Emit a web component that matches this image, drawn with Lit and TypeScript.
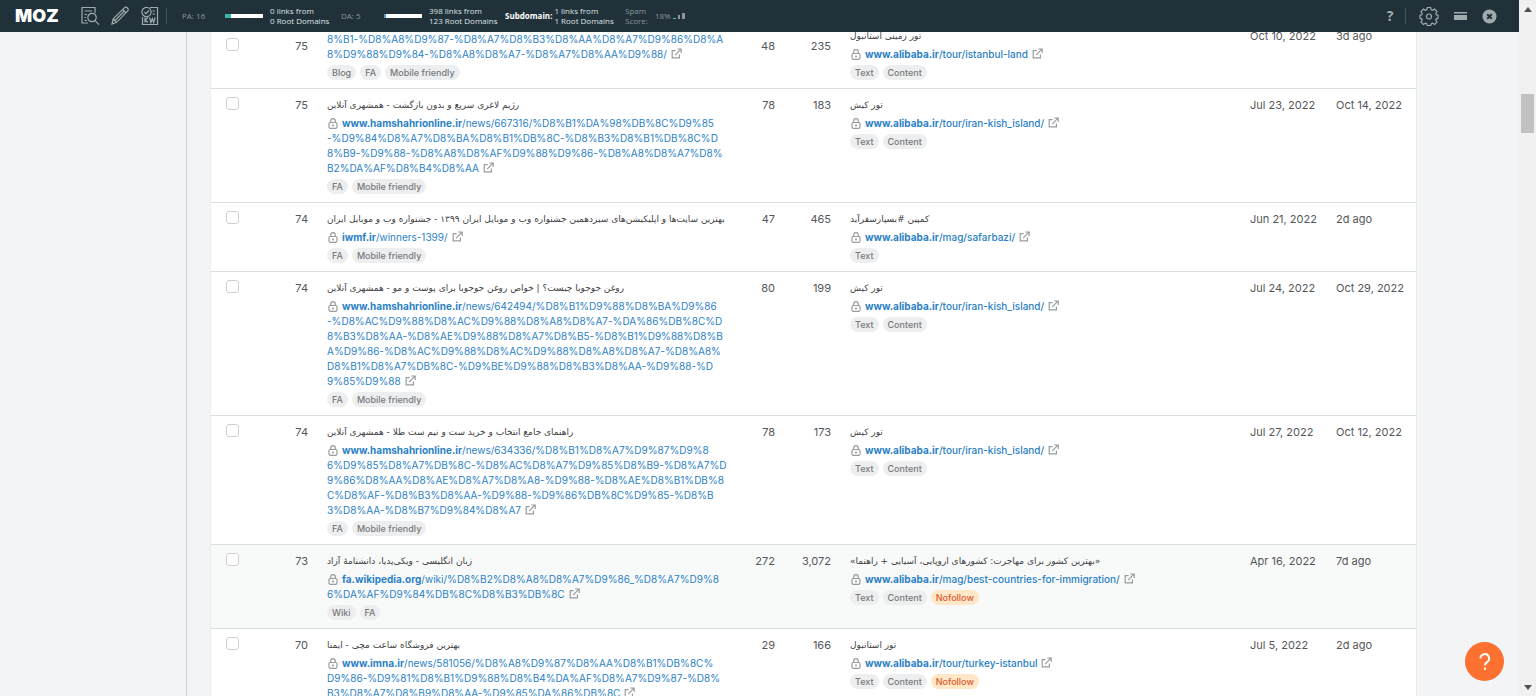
import { LitElement, html, css, svg, nothing } from "lit";
import { customElement, property } from "lit/decorators.js";

interface LinkRow {
  pa: string;
  title?: string;
  domain?: string;
  lines: string[];
  tags: string[];
  rd: string;
  ext: string;
  targetTitle: string;
  path: string;
  targetTags: string[];
  found: string;
  seen: string;
  partial?: boolean;
  hover?: boolean;
}

const rows: LinkRow[] = [
  {
    pa: "75",
    lines: ["8%B1-%D8%A8%D9%87-%D8%A7%D8%B3%D8%AA%D8%A7%D9%86%D8%A", "8%D9%88%D9%84-%D8%A8%D8%A7-%D8%A7%D8%AA%D9%88/"],
    tags: ["Blog", "FA", "Mobile friendly"],
    rd: "48", ext: "235",
    targetTitle: "تور زمینی استانبول", path: "/tour/istanbul-land", targetTags: ["Text", "Content"],
    found: "Oct 10, 2022", seen: "3d ago", partial: true,
  },
  {
    pa: "75",
    title: "رژیم لاغری سریع و بدون بازگشت - همشهری آنلاین",
    domain: "www.hamshahrionline.ir",
    lines: ["/news/667316/%D8%B1%DA%98%DB%8C%D9%85", "-%D9%84%D8%A7%D8%BA%D8%B1%DB%8C-%D8%B3%D8%B1%DB%8C%D", "8%B9-%D9%88-%D8%A8%D8%AF%D9%88%D9%86-%D8%A8%D8%A7%D8%", "B2%DA%AF%D8%B4%D8%AA"],
    tags: ["FA", "Mobile friendly"],
    rd: "78", ext: "183",
    targetTitle: "تور کیش", path: "/tour/iran-kish_island/", targetTags: ["Text", "Content"],
    found: "Jul 23, 2022", seen: "Oct 14, 2022",
  },
  {
    pa: "74",
    title: "بهترین سایت‌ها و اپلیکیشن‌های سیزدهمین جشنواره وب و موبایل ایران ۱۳۹۹ - جشنواره وب و موبایل ایران",
    domain: "iwmf.ir",
    lines: ["/winners-1399/"],
    tags: ["FA", "Mobile friendly"],
    rd: "47", ext: "465",
    targetTitle: "کمپین #بسپارسفرآید", path: "/mag/safarbazi/", targetTags: ["Text"],
    found: "Jun 21, 2022", seen: "2d ago",
  },
  {
    pa: "74",
    title: "روغن جوجوبا چیست؟ | خواص روغن جوجوبا برای پوست و مو - همشهری آنلاین",
    domain: "www.hamshahrionline.ir",
    lines: ["/news/642494/%D8%B1%D9%88%D8%BA%D9%86", "-%D8%AC%D9%88%D8%AC%D9%88%D8%A8%D8%A7-%DA%86%DB%8C%D", "8%B3%D8%AA-%D8%AE%D9%88%D8%A7%D8%B5-%D8%B1%D9%88%D8%B", "A%D9%86-%D8%AC%D9%88%D8%AC%D9%88%D8%A8%D8%A7-%D8%A8%", "D8%B1%D8%A7%DB%8C-%D9%BE%D9%88%D8%B3%D8%AA-%D9%88-%D", "9%85%D9%88"],
    tags: ["FA", "Mobile friendly"],
    rd: "80", ext: "199",
    targetTitle: "تور کیش", path: "/tour/iran-kish_island/", targetTags: ["Text", "Content"],
    found: "Jul 24, 2022", seen: "Oct 29, 2022",
  },
  {
    pa: "74",
    title: "راهنمای جامع انتخاب و خرید ست و نیم ست طلا - همشهری آنلاین",
    domain: "www.hamshahrionline.ir",
    lines: ["/news/634336/%D8%B1%D8%A7%D9%87%D9%8", "6%D9%85%D8%A7%DB%8C-%D8%AC%D8%A7%D9%85%D8%B9-%D8%A7%D", "9%86%D8%AA%D8%AE%D8%A7%D8%A8-%D9%88-%D8%AE%D8%B1%DB%8", "C%D8%AF-%D8%B3%D8%AA-%D9%88-%D9%86%DB%8C%D9%85-%D8%B", "3%D8%AA-%D8%B7%D9%84%D8%A7"],
    tags: ["FA", "Mobile friendly"],
    rd: "78", ext: "173",
    targetTitle: "تور کیش", path: "/tour/iran-kish_island/", targetTags: ["Text", "Content"],
    found: "Jul 27, 2022", seen: "Oct 12, 2022",
  },
  {
    pa: "73",
    title: "زبان انگلیسی - ویکی‌پدیا، دانشنامهٔ آزاد",
    domain: "fa.wikipedia.org",
    lines: ["/wiki/%D8%B2%D8%A8%D8%A7%D9%86_%D8%A7%D9%8", "6%DA%AF%D9%84%DB%8C%D8%B3%DB%8C"],
    tags: ["Wiki", "FA"],
    rd: "272", ext: "3,072",
    targetTitle: "«بهترین کشور برای مهاجرت: کشورهای اروپایی، آسیایی + راهنما»", path: "/mag/best-countries-for-immigration/", targetTags: ["Text", "Content", "Nofollow"],
    found: "Apr 16, 2022", seen: "7d ago", hover: true,
  },
  {
    pa: "70",
    title: "بهترین فروشگاه ساعت مچی - ایمنا",
    domain: "www.imna.ir",
    lines: ["/news/581056/%D8%A8%D9%87%D8%AA%D8%B1%DB%8C%", "D9%86-%D9%81%D8%B1%D9%88%D8%B4%DA%AF%D8%A7%D9%87-%D8%", "B3%D8%A7%D8%B9%D8%AA-%D9%85%DA%86%DB%8C"],
    tags: [],
    rd: "29", ext: "166",
    targetTitle: "تور استانبول", path: "/tour/turkey-istanbul", targetTags: ["Text", "Content", "Nofollow"],
    found: "Jul 5, 2022", seen: "2d ago",
  },
];

const lockIcon = html`<svg class="lock" viewBox="0 0 10 11" width="10" height="11" aria-hidden="true">
  <rect x="1" y="4.5" width="8" height="5.8" rx="1.2" />
  <path d="M2.7 4.5V3a2.3 2.3 0 0 1 4.6 0v1.5M5 6.6v1.8M4.1 7.4h1.8" />
</svg>`;

const outIcon = html`<svg class="out" viewBox="0 0 11 11" width="11" height="11" aria-hidden="true">
  <path d="M4.6 2.6H1.2v7.2h7.2V6.6M4.2 7.2 9.6 1.4M6.3 1h3.9v3.9" />
</svg>`;

@customElement("tag-list")
export class TagList extends LitElement {
  @property({ attribute: false }) tags: string[] = [];

  static styles = css`
    :host { display: flex; gap: 4px; margin-top: 3px; }
    .tag {
      height: 15px; padding: 0 5px; border-radius: 8px; background: #edeeef; color: #77797b;
      font: 500 9px/15px Inter, sans-serif; white-space: nowrap;
    }
    .warn { background: #ffe7c8; color: #dc5a2c; }
  `;

  render() {
    return this.tags.map((t) => html`<span class="tag ${t === "Nofollow" ? "warn" : ""}">${t}</span>`);
  }
}

@customElement("moz-bar")
export class MozBar extends LitElement {
  static styles = css`
    :host {
      display: flex; align-items: center; height: 32px; box-sizing: border-box; padding: 0 22px 0 15px;
      background: #203139; color: #dfe5e7; font: 8px/10px "Open Sans", "Noto Sans", sans-serif;
    }
    .logo { width: 65px; color: #fff; font: 900 18px/32px Inter, sans-serif; }
    button { display: flex; align-items: center; justify-content: center; padding: 0; border: 0; background: none; color: #a0abaf; }
    svg { display: block; fill: none; stroke: currentColor; stroke-width: 1.2; }
    .solid { fill: currentColor; stroke: none; }
    .tools { display: flex; gap: 10px; align-items: center; }
    .rule { width: 1px; height: 16px; background: #46565d; }
    .tools .rule { margin-left: -4px; }
    .metric { display: flex; align-items: center; }
    .label { width: 43px; color: #8c989d; }
    .track { width: 38px; height: 4px; margin-right: 7px; background: #fff; }
    .fill { height: 100%; background: #35b8b0; }
    .fill.blue { background: #4b9fe0; }
    .links { white-space: nowrap; }
    .pa { margin-left: 15px; width: 159px; }
    .da { width: 164px; }
    .sub { width: 120px; gap: 2px; }
    .spam { gap: 7px; color: #8c989d; }
    .spam svg { margin-left: -5px; }
    strong { color: #fff; }
    .actions { display: flex; align-items: center; margin-left: auto; gap: 15px; }
    .help { width: 12px; font: 700 14px/20px "Open Sans", sans-serif; }
    .actions .rule { margin: 0 -2px 0 -6px; }
  `;

  render() {
    return html`
      <span class="logo">MOZ</span>
      <div class="tools">
        <button aria-label="Page analysis"><svg width="20" height="20" viewBox="0 0 20 20">
          <path d="M8 17H2V1.5h13V7M4.5 5H12M4.5 8.5H7M4.5 11.5H6M4.5 14.5H7" /><circle cx="12" cy="11.5" r="4.2" /><path d="m15 14.7 4 4" /></svg></button>
        <button aria-label="Highlight links"><svg width="20" height="20" viewBox="0 0 20 20">
          <path d="m2 18 1.2-5.2L14.6 1.6c.8-.8 2-.4 2.8.4s1.200 2 .4 2.800L6.600 16.300zM3.200 12.800l3.400 3.500M12.700 3.500l3.500 3.500M5 14.500l9-9" /></svg></button>
        <button aria-label="Keyword ranking"><svg width="20" height="20" viewBox="0 0 20 20">
          <path d="M10 1.500h7.500v17h-15V11M12.500 5H15M12.500 8H15" /><circle cx="6.500" cy="6" r="4.600" /><path d="m4.500 6 1.600 1.700L9 4.500M5 11.500v5M8 11.500l-2.800 2.600L8 16.500M9.500 11.500l1.400 5 1.400-4 1.400 4 1.400-5" /></svg></button>
        <span class="rule"></span>
      </div>
      <div class="metric pa"><span class="label">PA: 16</span>
        <div class="track"><div class="fill" style="width:16%"></div></div>
        <span class="links">0 links from<br />0 Root Domains</span></div>
      <div class="metric da"><span class="label">DA: 5</span>
        <div class="track"><div class="fill blue" style="width:5%"></div></div>
        <span class="links">398 links from<br />123 Root Domains</span></div>
      <div class="metric sub"><strong>Subdomain:</strong><span class="links">1 links from<br />1 Root Domains</span></div>
      <div class="metric spam"><span>Spam<br />Score:</span><span>18%</span>
        <svg class="solid" width="13" height="8" viewBox="0 0 13 8"><path fill="#49c2a8" d="M0 6h3v1H0z" /><path d="M5 3h2v4H5zM9 1h3v6H9z" /></svg></div>
      <div class="actions">
        <button class="help" aria-label="Help">?</button>
        <span class="rule"></span>
        <button aria-label="Settings"><svg width="20" height="20" viewBox="0 0 20 20">
          <path d="M8.300 1.500h3.400l.6 2.300 1.300.5 2-1.200 2.400 2.400-1.200 2 .5 1.300 1.700.5v3l-1.800.5-.4 1.200 1.200 2-2.400 2.400-2-1.200-1.300.5-.6 1.800H8.300l-.6-1.800-1.300-.5-2 1.200L2 16l1.200-2-.4-1.200L1 12.300v-3l1.800-.5.4-1.300L2 5.500l2.400-2.400 2 1.200 1.300-.5z" /><circle cx="10" cy="10.500" r="2.500" /></svg></button>
        <button aria-label="Collapse"><svg class="solid" width="13" height="8" viewBox="0 0 13 8"><path d="M0 0h13v1.500H0zM0 3h13v5H0z" /></svg></button>
        <button aria-label="Close"><svg width="15" height="15" viewBox="0 0 15 15"><circle class="solid" cx="7.500" cy="7.500" r="7" /><path stroke="#203139" stroke-width="2" d="m5.200 5.200 4.600 4.600M9.800 5.200 5.200 9.800" /></svg></button>
      </div>
    `;
  }
}

@customElement("app-root")
export class AppRoot extends LitElement {
  static styles = css`
    :host { display: flex; height: 100vh; overflow: hidden; background: #f2f4f6; font: 11px/15px Inter, sans-serif; color: #54575a; }
    .page { display: flex; flex: 1; min-width: 0; position: relative; overflow: hidden; }
    moz-bar { position: absolute; inset: 0 0 auto 0; z-index: 2; }
    .side { flex: none; width: 186px; border-right: 1px solid #d0d4d7; }
    main { flex: 1; min-width: 0; padding: 20px 103px 0 24px; }
    table { width: 100%; table-layout: fixed; border-collapse: separate; border-spacing: 0; background: #fff; box-shadow: 0 0 1px #c3c8cc; }
    td { padding: 8px 0; border-bottom: 1px solid #dcdfe1; vertical-align: top; }
    .hover td { background: #f8f9f9; }
    .c-check { width: 40px; }
    .c-pa { width: 57px; }
    .c-source { width: 424px; }
    .c-rd { width: 43px; }
    .c-ext { width: 56px; }
    .c-found { width: 86px; }
    .c-seen { width: 80px; }
    .num { text-align: right; line-height: 16px; }
    .date { line-height: 16px; white-space: nowrap; }
    .check { padding-left: 15px; }
    .partial .num, .partial .check { padding-top: 18px; }
    .partial .source .url { margin-top: 4px; }
    input {
      display: block; appearance: none; width: 13px; height: 13px; margin: 0; border: 1px solid #cfd2d4;
      border-radius: 3px; background: #fff;
    }
    .source { padding-left: 19px; }
    .target { padding-left: 19px; }
    .title { font: 9px/16px "DejaVu Sans", sans-serif; color: #3f4244; text-align: left; white-space: nowrap; }
    .url { margin-top: 3px; font-size: 10px; white-space: nowrap; }
    .target .url { font-weight: 500; }
    a { color: #2b81c5; text-decoration: none; }
    b { font-weight: 700; }
    svg { fill: none; stroke: #989c9f; stroke-width: 1.2; }
    .lock { margin: 0 4px 0 1px; vertical-align: -2px; }
    .out { margin-left: 4px; vertical-align: -1px; }
    .scroll { flex: none; width: 17px; display: flex; flex-direction: column; align-items: center; background: #f1f1f1; }
    .arrow { fill: #505050; stroke: none; }
    .thumb { width: 13px; height: 39px; margin-top: 77px; background: #c1c1c1; }
    .down { margin-top: auto; }
    .assist {
      position: absolute; right: 15px; bottom: 15px; width: 39px; height: 39px; padding: 0; border: 0;
      border-radius: 50%; background: #fc7130; color: #fff;
    }
    .assist svg { display: block; margin: auto; stroke: #fff; stroke-width: 2; }
  `;

  private row(r: LinkRow) {
    return html`<tr class="${r.partial ? "partial" : ""} ${r.hover ? "hover" : ""}">
      <td class="check"><input type="checkbox" aria-label="Select link" /></td>
      <td class="num">${r.pa}</td>
      <td class="source">
        ${r.title ? html`<div class="title" dir="auto">${r.title}</div>` : nothing}
        <div class="url">${r.domain ? lockIcon : nothing}<a href="#">${r.domain ? html`<b>${r.domain}</b>` : nothing}${r.lines.map((l, i) => (i ? html`<br />${l}` : l))}</a>${outIcon}</div>
        <tag-list .tags=${r.tags}></tag-list>
      </td>
      <td class="num">${r.rd}</td>
      <td class="num">${r.ext}</td>
      <td class="target">
        <div class="title" dir="auto">${r.targetTitle}</div>
        <div class="url">${lockIcon}<a href="#"><b>www.alibaba.ir</b>${r.path}</a>${outIcon}</div>
        <tag-list .tags=${r.targetTags}></tag-list>
      </td>
      <td class="date">${r.found}</td>
      <td class="date">${r.seen}</td>
    </tr>`;
  }

  render() {
    return html`
      <div class="page">
        <moz-bar></moz-bar>
        <aside class="side"></aside>
        <main>
          <table>
            <colgroup>
              <col class="c-check" /><col class="c-pa" /><col class="c-source" /><col class="c-rd" />
              <col class="c-ext" /><col /><col class="c-found" /><col class="c-seen" />
            </colgroup>
            <tbody>${rows.map((r) => this.row(r))}</tbody>
          </table>
        </main>
        <button class="assist" aria-label="Help">
          <svg width="14" height="18" viewBox="0 0 14 18">${svg`<path d="M2.500 5.500a4.300 4.300 0 1 1 6.500 3.600c-1.300.9-2 1.500-2 3.200M7 14.500v2.200" />`}</svg>
        </button>
      </div>
      <div class="scroll" aria-hidden="true">
        <svg class="arrow" width="8" height="17" viewBox="0 0 8 17"><path d="M0 12l4-5 4 5z" /></svg>
        <div class="thumb"></div>
        <svg class="arrow down" width="8" height="17" viewBox="0 0 8 17"><path d="M0 6l4 5 4-5z" /></svg>
      </div>
    `;
  }
}
